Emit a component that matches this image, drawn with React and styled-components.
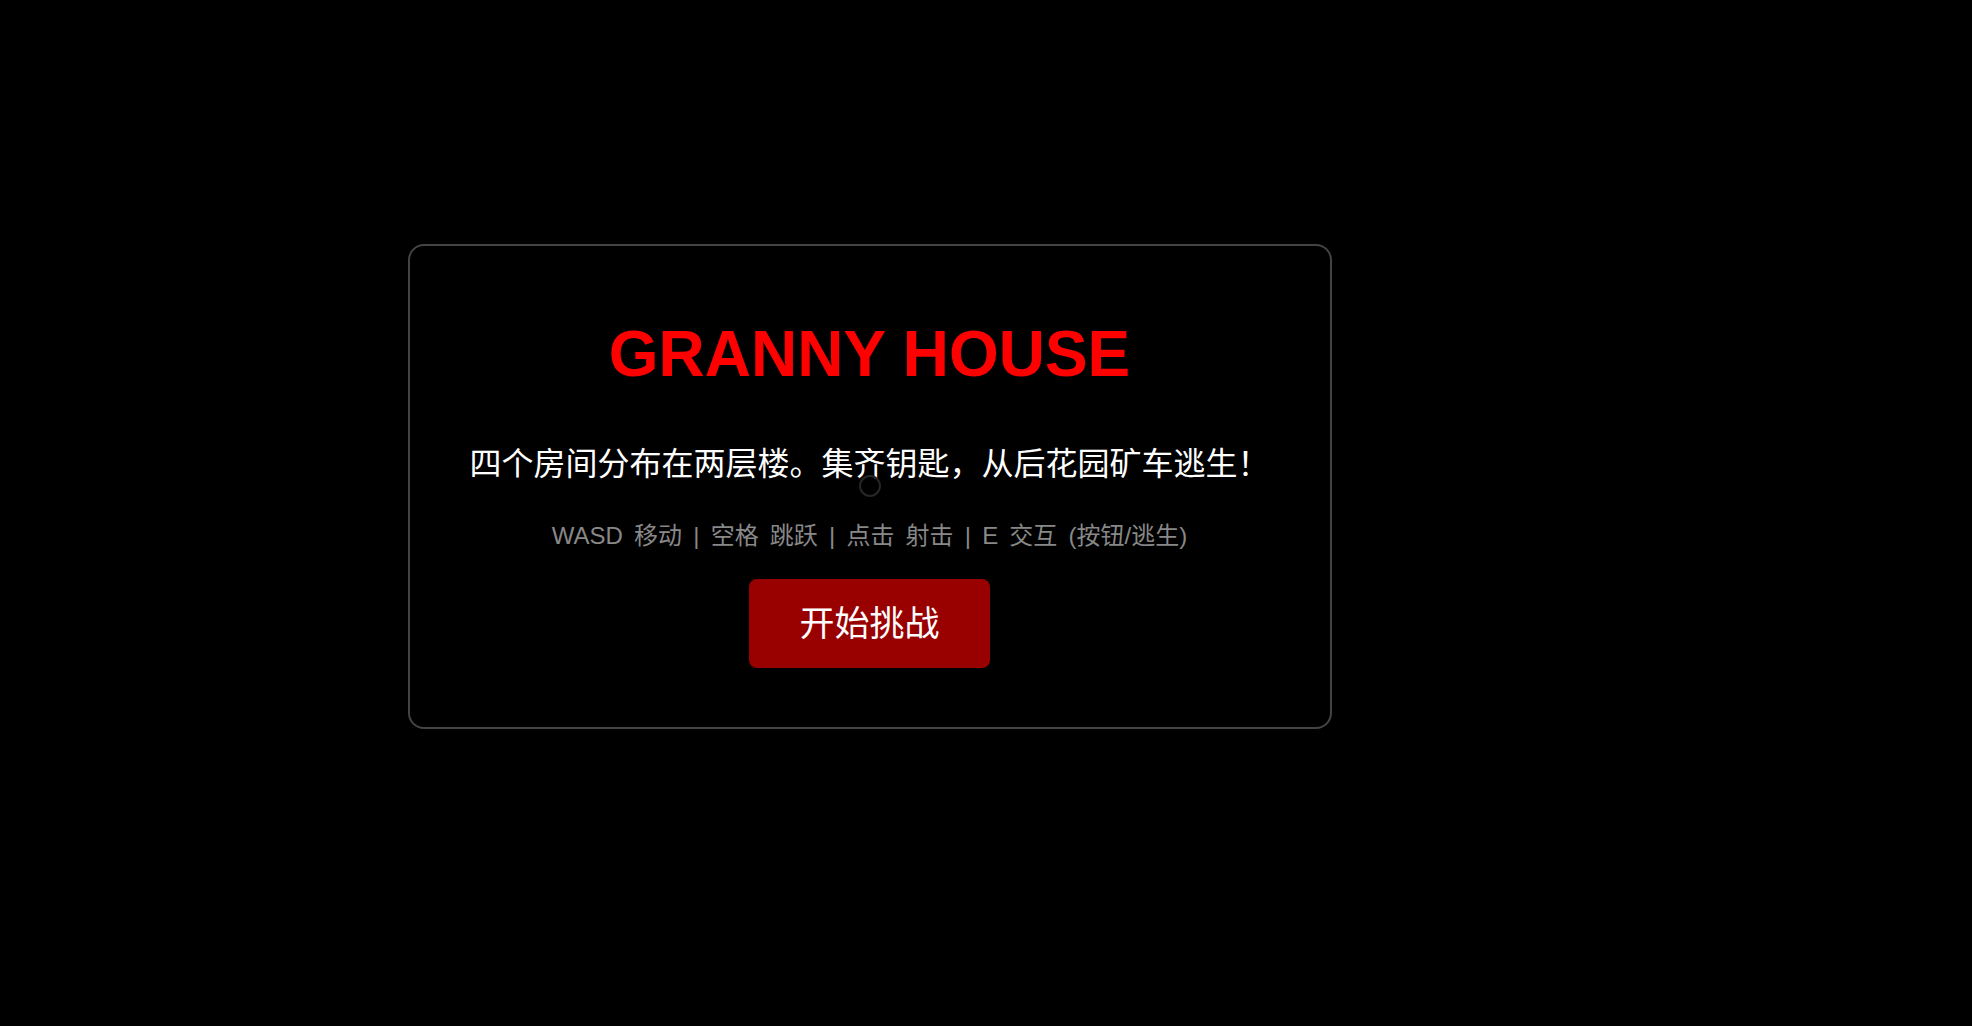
import styled, { createGlobalStyle } from 'styled-components';

const GlobalStyle = createGlobalStyle`
  html, body {
    margin: 0;
    padding: 0;
    background: #000;
    overflow: hidden;
  }
  * {
    box-sizing: border-box;
  }
`;

const controls = 'WASD 移动 | 空格 跳跃 | 点击 射击 | E 交互 (按钮/逃生)';

export default function App() {
  return (
    <>
      <GlobalStyle />
      <Stage>
        <Card>
          <Title>GRANNY HOUSE</Title>
          <Intro>四个房间分布在两层楼。集齐钥匙，从后花园矿车逃生！</Intro>
          <Controls>{controls}</Controls>
          <StartButton type="button">开始挑战</StartButton>
        </Card>
        <Crosshair />
      </Stage>
    </>
  );
}

const Stage = styled.div`
  position: relative;
  width: 1739px;
  height: 972px;
  display: flex;
  align-items: center;
  justify-content: center;
  background: #000;
`;

const Card = styled.div`
  width: 924px;
  display: flex;
  flex-direction: column;
  align-items: center;
  padding: 70px 60px 59px;
  background: rgba(0, 0, 0, 0.92);
  border: 2px solid #444;
  border-radius: 16px;
  font-family: "Liberation Sans", "Noto Sans CJK SC", sans-serif;
`;

const Title = styled.h1`
  margin: 0;
  font-size: 64px;
  line-height: 77px;
  font-weight: 700;
  color: #ff0000;
`;

const Intro = styled.p`
  margin: 47px 0 0;
  font-size: 32px;
  line-height: 48px;
  color: #fff;
`;

const Controls = styled.p`
  margin: 30px 0 0;
  font-size: 24px;
  line-height: 36px;
  color: #888;
  word-spacing: 4.5px;
`;

const StartButton = styled.button`
  margin-top: 25px;
  padding: 20px 50px;
  font-family: inherit;
  font-size: 35px;
  line-height: 49px;
  color: #fff;
  background: #990000;
  border: none;
  border-radius: 8px;
  cursor: pointer;
`;

const Crosshair = styled.div`
  position: absolute;
  left: 50%;
  top: 50%;
  width: 22px;
  height: 22px;
  transform: translate(-50%, -50%);
  border: 2px solid #262626;
  border-radius: 50%;
  pointer-events: none;
`;
